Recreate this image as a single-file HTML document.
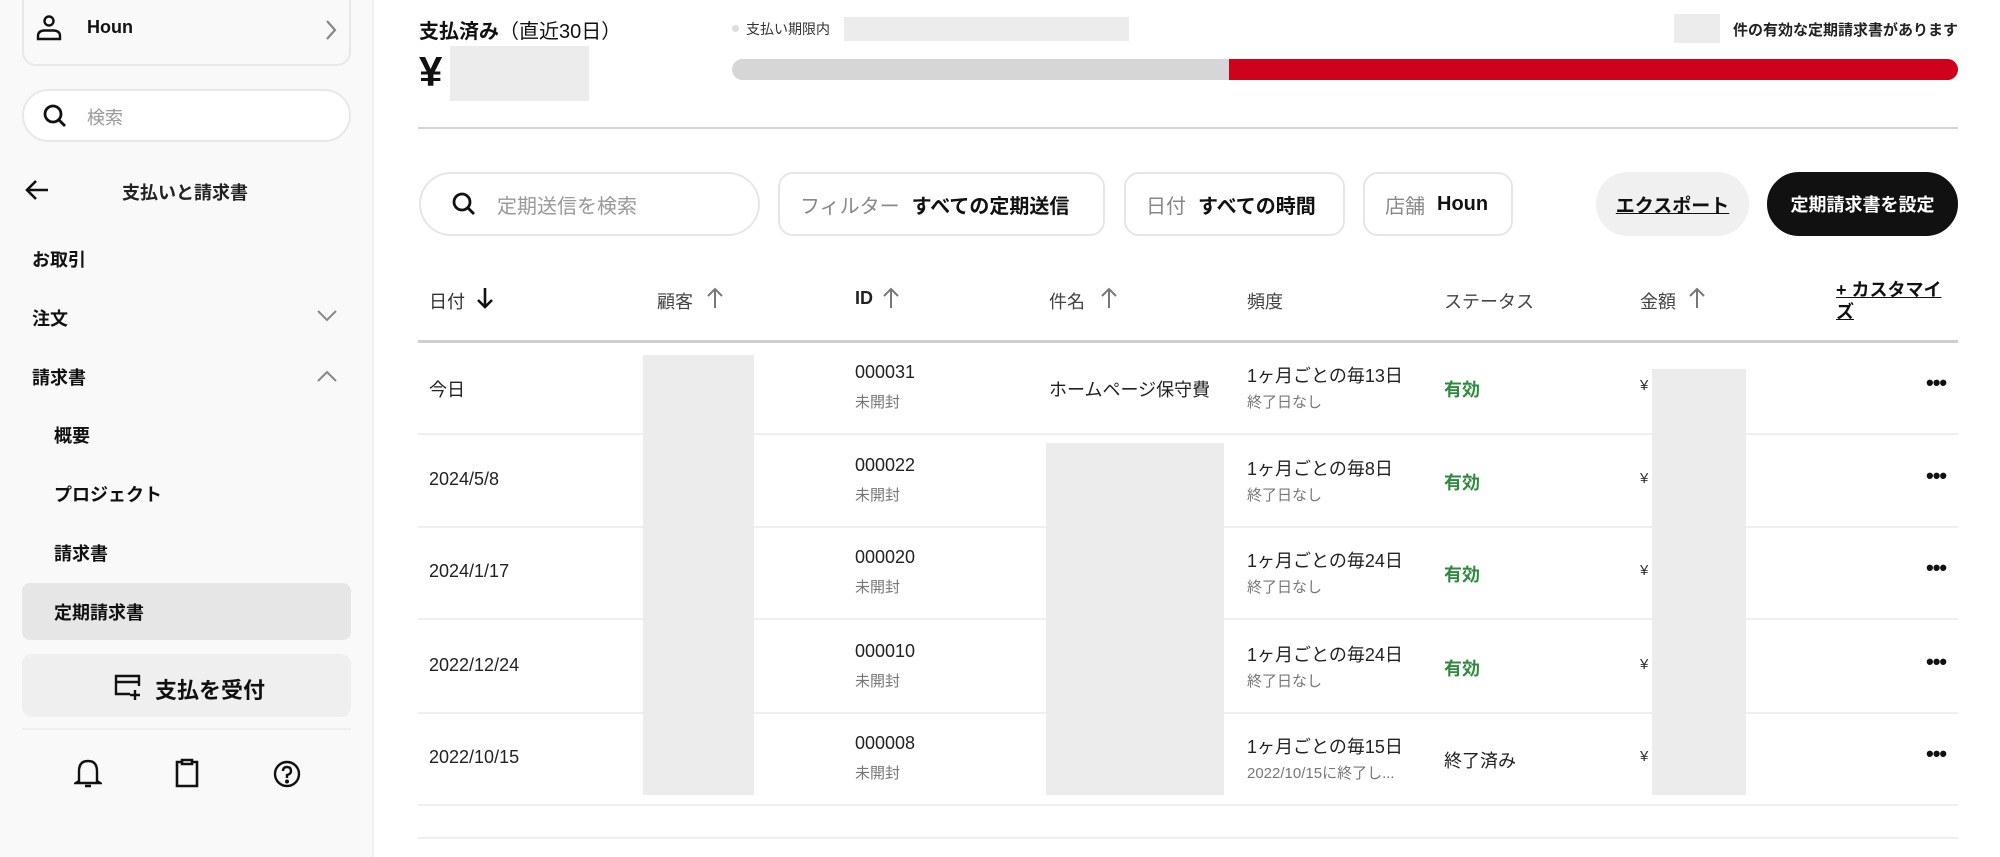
<!DOCTYPE html>
<html><head><meta charset="utf-8"><style>
*{box-sizing:border-box;margin:0;padding:0}
body{width:2000px;height:857px;overflow:hidden;background:#fff;font-family:"Liberation Sans","Noto Sans CJK JP",sans-serif;color:#111;position:relative}
.a{position:absolute;white-space:nowrap}
.side{position:absolute;left:0;top:0;width:374px;height:857px;background:#f9f9f9;border-right:2px solid #f1f1f1}
.b{font-weight:bold}
.g{background:#ececec;position:absolute}
.pill{position:absolute;top:172px;height:64px;border:2px solid #e6e6e6;background:#fff;display:flex;align-items:center;font-size:20px}
.row{position:absolute;left:418px;width:1540px;height:2px;background:#efefef}
.t{font-size:18px;color:#222}
.s{font-size:15px;color:#777}
.dots{font-size:22px;font-weight:bold;letter-spacing:-1px}
</style></head><body>
<div class="side">
  <div class="a" style="left:22px;top:-14px;width:329px;height:80px;border:2px solid #e8e8e8;border-radius:14px;background:#f9f9f9"></div>
  <svg class="a" style="left:35px;top:14px" width="28" height="28" viewBox="0 0 28 28" fill="none" stroke="#111" stroke-width="2.4"><circle cx="14" cy="7" r="4.5"/><path d="M3 25 L3 22 Q3 17 9 16.5 L19 16.5 Q25 17 25 22 L25 25 Z"/></svg>
  <div class="a b" style="left:87px;top:17px;font-size:18px">Houn</div>
  <svg class="a" style="left:324px;top:18px" width="14" height="24" viewBox="0 0 14 24" fill="none" stroke="#888" stroke-width="2.2"><path d="M3 3 L11 12 L3 21"/></svg>
  <div class="a" style="left:22px;top:89px;width:329px;height:53px;border:2px solid #e8e8e8;border-radius:27px;background:#fff"></div>
  <svg class="a" style="left:42px;top:103px" width="26" height="26" viewBox="0 0 26 26" fill="none" stroke="#111" stroke-width="2.8"><circle cx="11" cy="11" r="8"/><path d="M17 17 L23 23"/></svg>
  <div class="a" style="left:87px;top:104px;font-size:18px;color:#999">検索</div>
  <svg class="a" style="left:24px;top:178px" width="26" height="24" viewBox="0 0 26 24" fill="none" stroke="#111" stroke-width="2.6"><path d="M24 12 L3 12 M12 3 L3 12 L12 21"/></svg>
  <div class="a b" style="left:122px;top:179px;font-size:18px;color:#222">支払いと請求書</div>
  <div class="a b" style="left:32px;top:246px;font-size:18px">お取引</div>
  <div class="a b" style="left:32px;top:305px;font-size:18px">注文</div>
  <svg class="a" style="left:316px;top:309px" width="22" height="14" viewBox="0 0 22 14" fill="none" stroke="#888" stroke-width="2"><path d="M2 2 L11 11 L20 2"/></svg>
  <div class="a b" style="left:32px;top:364px;font-size:18px">請求書</div>
  <svg class="a" style="left:316px;top:369px" width="22" height="14" viewBox="0 0 22 14" fill="none" stroke="#888" stroke-width="2"><path d="M2 12 L11 3 L20 12"/></svg>
  <div class="a b" style="left:54px;top:422px;font-size:18px">概要</div>
  <div class="a b" style="left:54px;top:481px;font-size:18px">プロジェクト</div>
  <div class="a b" style="left:54px;top:540px;font-size:18px">請求書</div>
  <div class="a" style="left:22px;top:583px;width:329px;height:57px;background:#e6e6e6;border-radius:8px"></div>
  <div class="a b" style="left:54px;top:599px;font-size:18px">定期請求書</div>
  <div class="a" style="left:22px;top:654px;width:329px;height:63px;background:#efefef;border-radius:10px"></div>
  <svg class="a" style="left:113px;top:672px" width="30" height="30" viewBox="0 0 30 30" fill="none" stroke="#111" stroke-width="2.4"><path d="M17 22 L3 22 L3 4 L26 4 L26 14 M3 10 L26 10 M22 18 L22 28 M17 23 L27 23"/></svg>
  <div class="a b" style="left:155px;top:673px;font-size:22px">支払を受付</div>
  <div class="a" style="left:22px;top:728px;width:329px;height:2px;background:#f0f0f0"></div>
  <svg class="a" style="left:74px;top:757px" width="28" height="32" viewBox="0 0 28 32" fill="none" stroke="#111" stroke-width="2.4"><path d="M5 24 L5 14 Q5 4 14 4 Q23 4 23 14 L23 24 L26 26 L2 26 Z M11 29 L17 29"/></svg>
  <svg class="a" style="left:174px;top:757px" width="26" height="32" viewBox="0 0 26 32" fill="none" stroke="#111" stroke-width="2.6"><path d="M8 5 L3 5 L3 29 L23 29 L23 5 L18 5 M8 3 L18 3 L18 7 L8 7 Z"/></svg>
  <svg class="a" style="left:272px;top:759px" width="30" height="30" viewBox="0 0 30 30" fill="none" stroke="#111" stroke-width="2.4"><circle cx="15" cy="15" r="12"/><path d="M11 12 Q11 8 15 8 Q19 8 19 12 Q19 15 15 16 L15 19"/><circle cx="15" cy="22.5" r="0.8" fill="#111"/></svg>
</div>

<div class="a b" style="left:419px;top:15px;font-size:20px">支払済み<span style="font-weight:normal">（直近30日）</span></div>
<div class="a b" style="left:419px;top:48px;font-size:42px">¥</div>
<div class="g" style="left:450px;top:46px;width:139px;height:55px"></div>
<div class="a" style="left:732px;top:25px;width:7px;height:7px;border-radius:50%;background:#ddd"></div>
<div class="a" style="left:746px;top:19px;font-size:14px;color:#333">支払い期限内</div>
<div class="g" style="left:844px;top:17px;width:285px;height:24px"></div>
<div class="g" style="left:1674px;top:14px;width:46px;height:29px"></div>
<div class="a b" style="left:1720px;top:19px;font-size:15px;color:#222;width:238px;text-align:right">件の有効な定期請求書があります</div>
<div class="a" style="left:732px;top:59px;width:1226px;height:21px;border-radius:11px;background:#d6d6d6;overflow:hidden"><div style="position:absolute;left:497px;top:0;right:0;bottom:0;background:#d0021b"></div></div>
<div class="a" style="left:418px;top:127px;width:1540px;height:2px;background:#d4d4d4"></div>

<div class="pill" style="left:419px;width:341px;border-radius:32px">
  <svg style="margin-left:30px" width="26" height="26" viewBox="0 0 26 26" fill="none" stroke="#111" stroke-width="2.8"><circle cx="11" cy="11" r="8"/><path d="M17 17 L23 23"/></svg>
  <span style="margin-left:20px;color:#999">定期送信を検索</span></div>
<div class="pill" style="left:778px;width:327px;border-radius:15px;padding-left:20px"><span style="color:#888">フィルター</span><span class="b" style="margin-left:12px">すべての定期送信</span></div>
<div class="pill" style="left:1124px;width:221px;border-radius:15px;padding-left:20px"><span style="color:#888">日付</span><span class="b" style="margin-left:12px">すべての時間</span></div>
<div class="pill" style="left:1363px;width:150px;border-radius:15px;padding-left:20px"><span style="color:#888">店舗</span><span class="b" style="margin-left:12px">Houn</span></div>
<div class="pill" style="left:1596px;width:153px;border-radius:32px;background:#f0f0f0;border-color:#f0f0f0;justify-content:center"><span class="b" style="text-decoration:underline;font-size:19px">エクスポート</span></div>
<div class="pill" style="left:1767px;width:191px;border-radius:32px;background:#111;border-color:#111;justify-content:center"><span class="b" style="color:#fff;font-size:18px">定期請求書を設定</span></div>

<div class="a t" style="left:429px;top:288px;color:#333">日付</div>
<svg class="a" style="left:476px;top:286px" width="18" height="24" viewBox="0 0 18 24" fill="none" stroke="#111" stroke-width="2.6"><path d="M9 2 L9 21 M2 14 L9 21 L16 14"/></svg>
<div class="a t" style="left:657px;top:288px;color:#444">顧客</div>
<svg class="a" style="left:706px;top:286px" width="18" height="24" viewBox="0 0 18 24" fill="none" stroke="#777" stroke-width="2"><path d="M9 22 L9 3 M2 10 L9 3 L16 10"/></svg>
<div class="a t b" style="left:855px;top:288px">ID</div>
<svg class="a" style="left:882px;top:286px" width="18" height="24" viewBox="0 0 18 24" fill="none" stroke="#777" stroke-width="2"><path d="M9 22 L9 3 M2 10 L9 3 L16 10"/></svg>
<div class="a t" style="left:1049px;top:288px;color:#444">件名</div>
<svg class="a" style="left:1100px;top:286px" width="18" height="24" viewBox="0 0 18 24" fill="none" stroke="#777" stroke-width="2"><path d="M9 22 L9 3 M2 10 L9 3 L16 10"/></svg>
<div class="a t" style="left:1247px;top:288px;color:#444">頻度</div>
<div class="a t" style="left:1444px;top:288px;color:#444">ステータス</div>
<div class="a t" style="left:1640px;top:288px;color:#444">金額</div>
<svg class="a" style="left:1688px;top:286px" width="18" height="24" viewBox="0 0 18 24" fill="none" stroke="#777" stroke-width="2"><path d="M9 22 L9 3 M2 10 L9 3 L16 10"/></svg>
<div class="a b" style="left:1836px;top:279px;font-size:18px;line-height:22px;text-decoration:underline;white-space:normal;width:112px;word-break:break-all">+ カスタマイズ</div>
<div class="a" style="left:418px;top:340px;width:1540px;height:3px;background:#cfcfcf"></div>

<div class="row" style="top:433px"></div><div class="row" style="top:526px"></div><div class="row" style="top:618px"></div><div class="row" style="top:712px"></div><div class="row" style="top:804px"></div><div class="row" style="top:837px"></div>

<div class="g" style="left:643px;top:355px;width:111px;height:440px"></div>
<div class="g" style="left:1046px;top:443px;width:178px;height:352px"></div>
<div class="g" style="left:1652px;top:369px;width:94px;height:426px"></div>

<div class="a t" style="left:429px;top:376px">今日</div>
<div class="a t" style="left:855px;top:362px">000031</div><div class="a s" style="left:855px;top:391px">未開封</div>
<div class="a t" style="left:1049px;top:376px">ホームページ保守費</div>
<div class="a t" style="left:1247px;top:362px">1ヶ月ごとの毎13日</div><div class="a s" style="left:1247px;top:391px">終了日なし</div>
<div class="a t b" style="left:1444px;top:376px;color:#2e8b3e">有効</div>
<div class="a s" style="left:1640px;top:377px;color:#333">¥</div>
<div class="a dots" style="left:1926px;top:370px">•••</div>

<div class="a t" style="left:429px;top:469px">2024/5/8</div>
<div class="a t" style="left:855px;top:455px">000022</div><div class="a s" style="left:855px;top:484px">未開封</div>
<div class="a t" style="left:1247px;top:455px">1ヶ月ごとの毎8日</div><div class="a s" style="left:1247px;top:484px">終了日なし</div>
<div class="a t b" style="left:1444px;top:469px;color:#2e8b3e">有効</div>
<div class="a s" style="left:1640px;top:470px;color:#333">¥</div>
<div class="a dots" style="left:1926px;top:463px">•••</div>

<div class="a t" style="left:429px;top:561px">2024/1/17</div>
<div class="a t" style="left:855px;top:547px">000020</div><div class="a s" style="left:855px;top:576px">未開封</div>
<div class="a t" style="left:1247px;top:547px">1ヶ月ごとの毎24日</div><div class="a s" style="left:1247px;top:576px">終了日なし</div>
<div class="a t b" style="left:1444px;top:561px;color:#2e8b3e">有効</div>
<div class="a s" style="left:1640px;top:562px;color:#333">¥</div>
<div class="a dots" style="left:1926px;top:555px">•••</div>

<div class="a t" style="left:429px;top:655px">2022/12/24</div>
<div class="a t" style="left:855px;top:641px">000010</div><div class="a s" style="left:855px;top:670px">未開封</div>
<div class="a t" style="left:1247px;top:641px">1ヶ月ごとの毎24日</div><div class="a s" style="left:1247px;top:670px">終了日なし</div>
<div class="a t b" style="left:1444px;top:655px;color:#2e8b3e">有効</div>
<div class="a s" style="left:1640px;top:656px;color:#333">¥</div>
<div class="a dots" style="left:1926px;top:649px">•••</div>

<div class="a t" style="left:429px;top:747px">2022/10/15</div>
<div class="a t" style="left:855px;top:733px">000008</div><div class="a s" style="left:855px;top:762px">未開封</div>
<div class="a t" style="left:1247px;top:733px">1ヶ月ごとの毎15日</div><div class="a s" style="left:1247px;top:762px">2022/10/15に終了し...</div>
<div class="a t" style="left:1444px;top:747px">終了済み</div>
<div class="a s" style="left:1640px;top:748px;color:#333">¥</div>
<div class="a dots" style="left:1926px;top:741px">•••</div>
</body></html>
